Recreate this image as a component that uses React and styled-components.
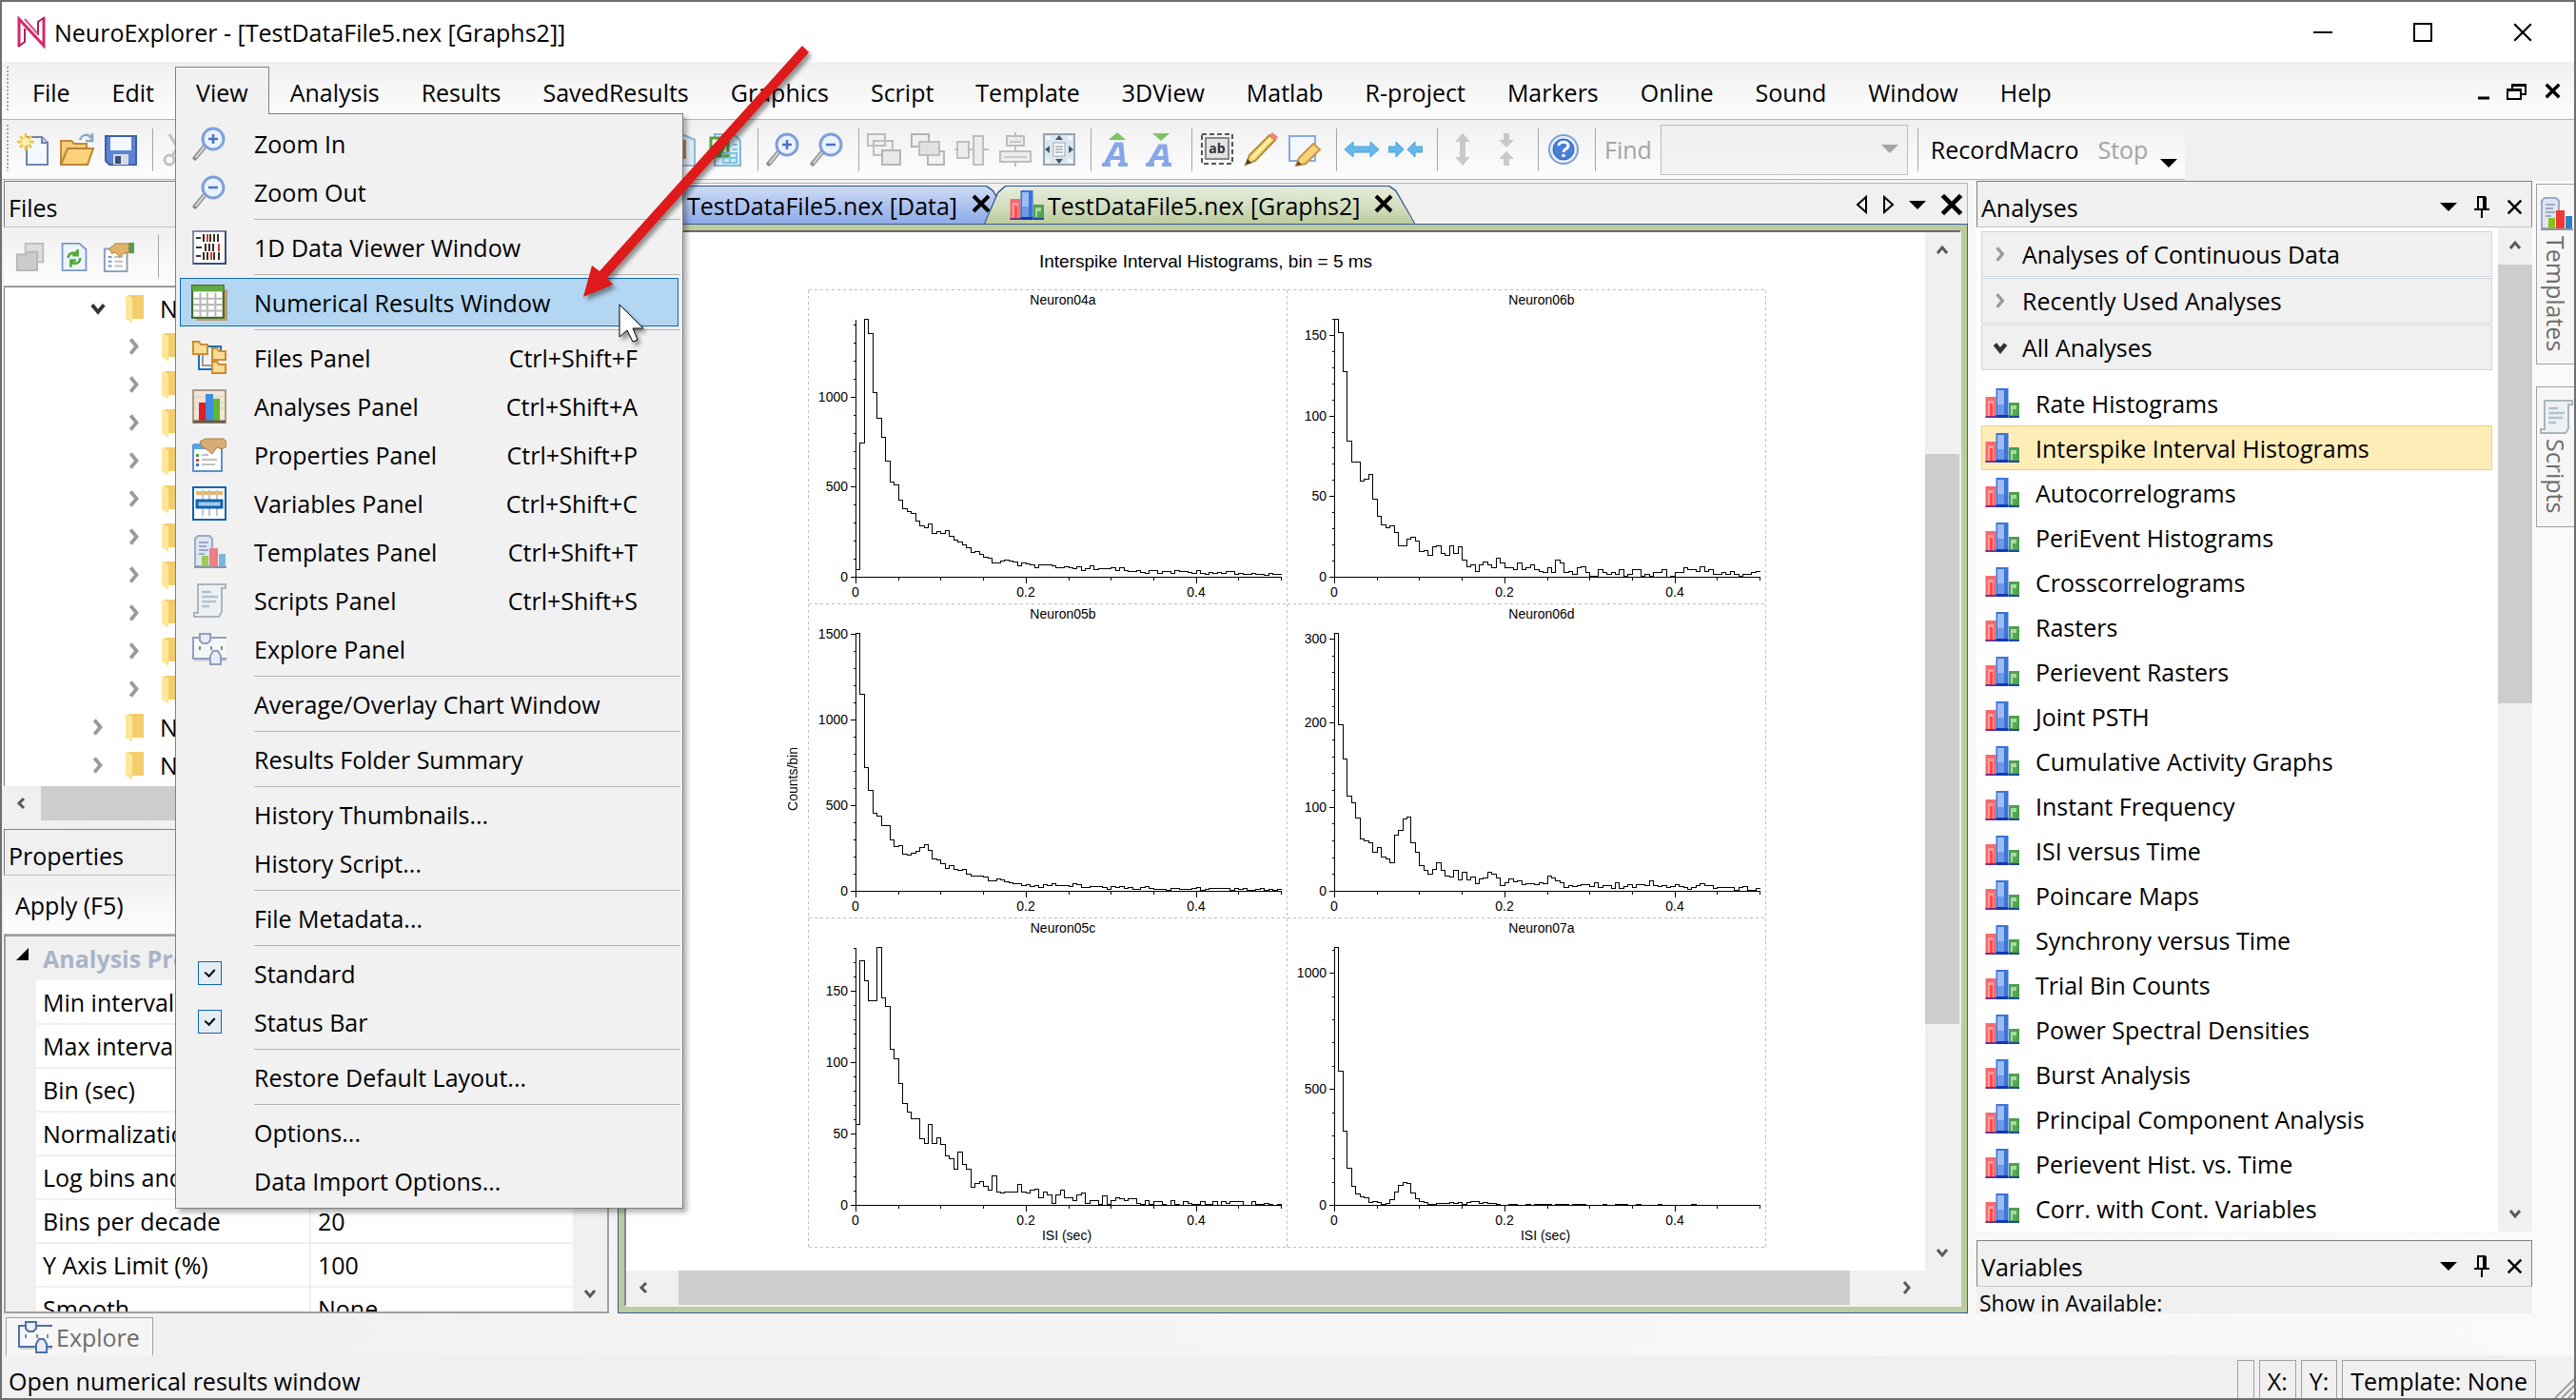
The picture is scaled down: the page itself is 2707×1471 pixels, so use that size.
import { Fragment } from 'react';
import styled, { createGlobalStyle } from 'styled-components';

const GlobalStyle = createGlobalStyle`
  * {
    box-sizing: border-box;
  }
  body {
    margin: 0;
    background: #f0f0f0;
    color: #000;
    font-family: 'Open Sans', 'Noto Sans', sans-serif;
    font-size: 25px;
    line-height: 34px;
  }
  button, input, select {
    font: inherit;
    color: inherit;
  }
  button {
    border: 0;
    padding: 0;
    background: none;
    white-space: nowrap;
  }
  svg {
    display: block;
    flex: none;
  }
`;

/* ---------- window frame ---------- */

const Window = styled.div`
  position: relative;
  display: flex;
  flex-direction: column;
  height: 100vh;
  border: 2px solid #6f6f6f;
  background: linear-gradient(90deg, #f0f0f0, #fafafa);
  overflow: hidden;
`;

const TitleBar = styled.header`
  display: flex;
  align-items: center;
  height: 63px;
  flex: none;
  padding: 0 2px 0 15px;
  background: #fff;
`;

const Title = styled.h1`
  flex: 1;
  margin: 0 0 0 8px;
  font-size: inherit;
  font-weight: 400;
`;

const CaptionButton = styled.button`
  display: flex;
  align-items: center;
  justify-content: center;
  width: 105px;
  height: 63px;
`;

// Dotted handle at the left end of the bars
const Grip = styled.span`
  width: 2px;
  align-self: stretch;
  margin: 5px 3px 8px 5px;
  background: repeating-linear-gradient(#a8a8a8 0 2px, transparent 2px 4px);
`;

/* ---------- menu bar ---------- */

const MenuBar = styled.nav`
  display: flex;
  align-items: flex-start;
  height: 61px;
  flex: none;
  border-bottom: 1px solid #b4b4b4;
  background: linear-gradient(#f0f0f0, #fdfdfd);
`;

const MenuSlot = styled.div`
  position: relative;
  margin-top: 5px;
`;

const MenuButton = styled.button`
  height: 50px;
  padding: 3px 21px 0;
  border: 1px solid transparent;
  border-bottom: 0;
  ${({ $open }) =>
    $open &&
    `
    position: relative;
    z-index: 3;
    border-color: #808080;
    background: #f1f1f1;
  `}
`;

const MdiControls = styled.div`
  display: flex;
  align-items: center;
  gap: 18px;
  height: 61px;
  margin-left: auto;
  padding: 0 14px 0 0;
`;

const Menu = styled.div`
  position: absolute;
  z-index: 2;
  top: 49px;
  left: 0;
  width: 534px;
  padding: 5px 0 3px;
  border: 1px solid #808080;
  background: #f1f1f1;
  box-shadow: 4px 4px 5px rgba(0, 0, 0, 0.3);
`;

const MenuRow = styled.button`
  display: flex;
  align-items: center;
  width: calc(100% - 8px);
  height: 51px;
  margin: 0 4px;
  padding: 2px 42px 2px 11px;
  border: 1px solid ${({ $active }) => ($active ? '#0a68b4' : 'transparent')};
  background: ${({ $active }) => ($active ? '#b3d6f2' : 'none')};
  text-align: left;
`;

const MenuIcon = styled.span`
  display: flex;
  justify-content: center;
  width: 38px;
  margin-right: 28px;
`;

const MenuShortcut = styled.span`
  margin-left: auto;
`;

const MenuDivider = styled.hr`
  height: 1px;
  margin: 3px 2px 3px 82px;
  border: 0;
  background: #b4b4b4;
`;

const MenuCheck = styled.input`
  display: grid;
  place-items: center;
  appearance: none;
  width: 25px;
  height: 25px;
  margin: 0;
  border: 1px solid #0a68b4;
  background: #e5ecf3;
  &::after {
    content: '';
    width: 5px;
    height: 8px;
    margin-top: -4px;
    border: solid #000;
    border-width: 0 2px 2px 0;
    transform: rotate(42deg);
  }
`;

/* ---------- toolbar ---------- */

const ToolbarRow = styled.div`
  display: flex;
  flex: none;
  height: 64px;
  background: #f0f0f0;
`;

const Toolbar = styled.div`
  display: flex;
  align-items: center;
  height: 63px;
  padding-right: 8px;
  border-bottom: 1px solid #b4b4b4;
  background: linear-gradient(#f0f0f0, #fdfdfd);
`;

const ToolButton = styled.button`
  display: flex;
  align-items: center;
  justify-content: center;
  width: 46px;
  height: 46px;
  opacity: ${({ disabled }) => (disabled ? 0.6 : 1)};
`;

const ToolDivider = styled.span`
  width: 1px;
  height: 45px;
  margin: 0 3px 0 10px;
  background: #a5a5a5;
`;

const FindLabel = styled.label`
  display: flex;
  align-items: center;
  gap: 9px;
  margin-left: 6px;
  color: #a3a3a3;
`;

const SelectBox = styled.span`
  position: relative;
  display: block;
  width: 260px;
  svg {
    position: absolute;
    right: 10px;
    top: 21px;
  }
`;

const FindSelect = styled.select`
  display: block;
  appearance: none;
  width: 100%;
  height: 53px;
  border: 1px solid #a3a3a3;
  border-radius: 0;
  background: #f0f0f0;
`;

const TextButton = styled.button`
  padding: 0 10px;
  color: ${({ disabled }) => (disabled ? '#a3a3a3' : '#000')};
`;

const Overflow = styled.span`
  align-self: flex-end;
  padding: 0 0 12px 3px;
`;

/* ---------- docked panels ---------- */

const Workspace = styled.main`
  display: flex;
  flex: 1;
  min-height: 0;
  gap: 9px;
  padding-left: 2px;
`;

const Column = styled.section`
  display: flex;
  flex-direction: column;
  flex: none;
  width: ${({ $width }) => $width}px;
  min-height: 0;
`;

const PanelHeader = styled.div`
  display: flex;
  align-items: center;
  flex: none;
  height: 49px;
  padding: 6px 9px 0 4px;
  border: 1px solid #a0a0a0;
  border-color: #808080 #808080 #c4c4c4;
  background: #f0f0f0;
`;

const PanelTitle = styled.h2`
  flex: 1;
  margin: 0;
  font-size: inherit;
  font-weight: 400;
`;

const PanelButtons = styled.div`
  display: flex;
  align-items: center;
  gap: 18px;
  height: 30px;
`;

const PanelToolbar = styled.div`
  display: flex;
  align-items: center;
  flex: none;
  gap: 14px;
  height: 62px;
  padding: 0 12px;
  border-bottom: 1px solid #b4b4b4;
  background: linear-gradient(#f0f0f0, #fdfdfd);
`;

const Tree = styled.div`
  flex: none;
  height: 525px;
  padding-top: 2px;
  border: 1px solid #828282;
  border-bottom: 0;
  background: #fff;
  overflow: hidden;
`;

const TreeRow = styled.div`
  display: flex;
  align-items: center;
  height: 40px;
  padding-left: ${({ $depth }) => 88 + $depth * 38}px;
`;

const TreeFolder = styled.span`
  margin: 0 16px 0 19px;
`;

// Space between two stacked panels
const PanelGap = styled.div`
  flex: none;
  height: 9px;
`;

const PropertyBox = styled.div`
  display: flex;
  flex: 1;
  min-height: 0;
  border: 2px solid #a0a0a0;
  background: #f0f0f0;
  overflow: hidden;
`;

const PropertyTable = styled.table`
  align-self: flex-start;
  flex: 1;
  border-collapse: collapse;
  table-layout: fixed;
  td, th {
    height: 46px;
    padding: 0;
    text-align: left;
    font-weight: 400;
    white-space: nowrap;
  }
  tbody th, tbody td {
    padding-left: 7px;
    border-bottom: 2px solid #f0f0f0;
    background: #fff;
  }
  tbody td:first-child {
    width: 32px;
    border: 0;
    background: #f0f0f0;
  }
  tbody th {
    width: 288px;
    border-right: 2px solid #f0f0f0;
  }
  thead th {
    padding-left: 7px;
    color: #a9b4c8;
    font-weight: 700;
  }
`;

/* ---------- scroll bars ---------- */

const Scroll = styled.div`
  display: flex;
  flex: none;
  flex-direction: ${({ $horizontal }) => ($horizontal ? 'row' : 'column')};
  ${({ $horizontal }) => ($horizontal ? 'height: 36px;' : 'width: 36px;')}
  ${({ $corner }) => $corner && 'padding-right: 36px;'}
  background: #f0f0f0;
`;

const ScrollArrow = styled.button`
  display: grid;
  place-items: center;
  flex: 0 0 38px;
`;

const ScrollSpan = styled.span`
  flex: ${({ $grow }) => $grow} 1 0;
  background: ${({ $thumb }) => ($thumb ? '#cdcdcd' : 'transparent')};
`;

/* ---------- documents ---------- */

const DocumentArea = styled.section`
  display: flex;
  flex: 1;
  flex-direction: column;
  min-width: 0;
`;

const TabStrip = styled.div`
  display: flex;
  flex: none;
  align-items: flex-end;
  height: 43px;
  margin-top: 2px;
  padding-left: 6px;
  border-top: 1px solid #b4b4b4;
  border-right: 1px solid #b4b4b4;
  background: #f0f0f0;
`;

const DocumentTab = styled.div`
  position: relative;
  display: flex;
  align-items: center;
  height: 40px;
  margin-right: -30px;
  padding: 1px 23px 0 27px;
  z-index: ${({ $active }) => ($active ? 1 : 0)};
  &::before, &::after {
    content: '';
    position: absolute;
    z-index: -1;
    inset: 0;
    clip-path: polygon(0 100%, 14px 7px, 22px 0, calc(100% - 27px) 0, calc(100% - 20px) 5px, 100% 100%);
    background: #2d4f91;
  }
  &::after {
    inset: 1px 1px 0;
    background: ${({ $active }) =>
      $active
        ? 'linear-gradient(#e6eddb, #d5dfc2 50%, #bccc9e)'
        : 'linear-gradient(#cfdcf5, #a9c0ee 55%, #8eabe8)'};
  }
`;

const TabLabel = styled.button`
  display: flex;
  align-items: center;
  gap: 4px;
`;

const TabClose = styled.button`
  margin: -4px 0 0 15px;
`;

const TabControls = styled.div`
  display: flex;
  align-items: center;
  gap: 15px;
  height: 40px;
  margin-left: auto;
  padding-right: 4px;
`;

const DocumentFrame = styled.div`
  display: flex;
  flex: 1;
  min-height: 0;
  flex-direction: column;
  border: 1px solid #3c5c96;
  padding: 6px;
  background: #bccc9e;
`;

const DocumentView = styled.div`
  display: flex;
  flex-direction: column;
  flex: 1;
  min-height: 0;
  border: 2px solid #f0f0f0;
  border-top-color: #696969;
  border-left-color: #888;
`;

const DocumentBody = styled.div`
  display: flex;
  flex: 1;
  min-height: 0;
`;

const Page = styled.div`
  flex: 1;
  min-width: 0;
  padding-top: 16px;
  background: #fff;
  font-family: 'Liberation Sans', Arial, sans-serif;
  font-size: 14px;
  overflow: hidden;
`;

const PageTitle = styled.h3`
  margin: 0 0 14px 434px;
  font-size: 19px;
  font-weight: 400;
  line-height: 30px;
`;

const Figure = styled.div`
  display: flex;
  align-items: center;
  padding-left: 165px;
`;

const AxisTitle = styled.span`
  width: 26px;
  margin-top: 22px;
  line-height: 20px;
  writing-mode: vertical-rl;
  transform: rotate(180deg);
`;

const ChartGrid = styled.div`
  display: grid;
  grid-template-columns: 503px 503px;
  svg {
    overflow: visible;
    font-size: 14px;
  }
`;

/* ---------- analyses list ---------- */

const ListBox = styled.div`
  display: flex;
  flex: 1;
  min-height: 0;
  background: #fff;
`;

const List = styled.div`
  flex: 1;
  padding: 4px 6px 0 5px;
  overflow: hidden;
`;

const GroupButton = styled.button`
  display: flex;
  align-items: center;
  gap: 14px;
  width: 100%;
  height: 48px;
  margin-bottom: 1px;
  padding-left: 10px;
  border: 1px solid #ccd3df;
  background: #f0f0f0;
`;

const Items = styled.ul`
  margin: 11px 0 0;
  padding: 0;
  list-style: none;
`;

const ItemButton = styled.button`
  display: flex;
  align-items: center;
  gap: 17px;
  width: 100%;
  height: 47px;
  padding-left: 3px;
  border: 1px solid ${({ $active }) => ($active ? '#f0d078' : 'transparent')};
  background: ${({ $active }) => ($active ? '#ffedb8' : 'none')};
`;

const VariablesPanel = styled.div`
  flex: none;
  height: 77px;
  margin-top: 9px;
  background: #f0f0f0;
  overflow: hidden;
`;

const VariablesText = styled.div`
  padding-left: 3px;
  font-size: 23px;
`;

const SideBar = styled.aside`
  display: flex;
  flex-direction: column;
  gap: 23px;
  width: 40px;
  margin-left: -5px;
  padding-top: 3px;
`;

const SideTab = styled.button`
  display: flex;
  flex-direction: column;
  align-items: center;
  gap: 5px;
  padding: 13px 0;
  border: 1px solid #a0a0a0;
  border-right: 0;
  background: #f6f6f6;
  color: #6d6d6d;
`;

const SideTabText = styled.span`
  writing-mode: vertical-rl;
`;

/* ---------- bottom bars ---------- */

const DockBar = styled.div`
  flex: none;
  height: 44px;
  padding: 4px 0 0 4px;
`;

const DockTab = styled.button`
  display: flex;
  align-items: center;
  gap: 4px;
  height: 40px;
  padding: 0 13px 0 12px;
  border: 1px solid #a0a0a0;
  border-bottom: 0;
  background: #f6f6f6;
  color: #6d6d6d;
`;

const StatusBar = styled.footer`
  display: flex;
  flex: none;
  align-items: flex-end;
  gap: 5px;
  height: 45px;
  background: #f0f0f0;
`;

const StatusText = styled.span`
  flex: 1;
  padding: 0 0 1px 7px;
`;

const StatusCell = styled.span`
  height: 40px;
  padding: 4px 8px 0;
  border: 1px solid #a0a0a0;
  border-bottom: 0;
`;

/* ---------- icons ---------- */

function Icon({ children, size = 36 }) {
  return (
    <svg width={size} height={size} viewBox="0 0 36 36" fill="none" aria-hidden="true">
      {children}
    </svg>
  );
}

function Magnifier({ minus }) {
  return (
    <Icon>
      <path d="M3 33 L13 21" stroke="#8c8c8c" strokeWidth="5" strokeLinecap="round" />
      <path d="M4 32 L13 21" stroke="#d5d5d5" strokeWidth="2" strokeLinecap="round" />
      <circle cx="22" cy="13" r="11" fill="#eaf2ff" stroke="#7d9fdc" strokeWidth="3" />
      <path d={minus ? 'M17 13H27' : 'M17 13H27M22 8V18'} stroke="#4b74c4" strokeWidth="2.5" />
    </Icon>
  );
}

function Bars() {
  return (
    <Icon>
      <rect x="0.5" y="11" width="11" height="22" fill="#f56a6e" />
      <rect x="3" y="15" width="6" height="16" fill="#fb9c9c" />
      <rect x="5" y="18" width="3" height="13" fill="#ff4a4a" />
      <rect x="0.5" y="31" width="11" height="2" fill="#7a2f86" />
      <rect x="11.5" y="2" width="13" height="31" fill="#3a74d8" />
      <rect x="13" y="4" width="7" height="15" fill="#9dbcf1" />
      <rect x="13" y="19" width="7" height="11" fill="#6f98e6" />
      <rect x="11.5" y="30" width="13" height="3" fill="#1438b8" />
      <rect x="25" y="17" width="11" height="16" fill="#4ea04e" />
      <rect x="27" y="20" width="6" height="10" fill="#a9d9a4" />
      <rect x="29" y="24" width="4" height="6" fill="#4fae55" />
      <rect x="25" y="31" width="11" height="2" fill="#1f4a9a" />
    </Icon>
  );
}

function ExploreIcon({ color = '#8f9fc0' }) {
  return (
    <Icon>
      <path d="M36 6H1V28H36" fill="#f6f7f9" stroke={color} strokeWidth="2" />
      <path d="M2 30H36" stroke="#cfd3da" strokeWidth="2" />
      <path d="M8 15V19M20 15V19M31 15V19" stroke="#888" strokeWidth="2" />
      <path d="M8 2H19V9L16 12H11L8 9Z" fill="#e8edf8" stroke={color} strokeWidth="2" />
      <path d="M19 34V25L22 20H27L30 25V34Z" fill="#e8edf8" stroke={color} strokeWidth="2" />
    </Icon>
  );
}

function TemplateIcon({ bright }) {
  return (
    <Icon>
      <path d="M3 33V4L6 1H18L21 4V33Z" fill="#dfe6f1" stroke="#9aabc6" strokeWidth="2" />
      <path d="M7 8H17M7 12H15M7 16H17M7 20H13" stroke="#9aabc6" strokeWidth="2" />
      <rect x="10" y="22" width="7" height="11" fill={bright ? '#86c21c' : '#9ccb58'} />
      <rect x="18" y="14" width="9" height="19" fill={bright ? '#ee3a35' : '#ee7f85'} />
      <rect x="28" y="20" width="7" height="13" fill={bright ? '#2b82cc' : '#79b7e4'} />
      <path d="M2 34H36" stroke="#8c95a8" strokeWidth="2" />
    </Icon>
  );
}

function ScriptIcon() {
  return (
    <Icon>
      <path d="M6 1H35V5H31V30L28 35H2V31H6Z" fill="#eef1f3" stroke="#a9b5bd" strokeWidth="2" />
      <path d="M10 9H20M10 14H27M10 19H25M10 24H18" stroke="#b2c2cf" strokeWidth="2.5" />
    </Icon>
  );
}

function PropertiesIcon() {
  return (
    <Icon>
      <rect x="1" y="8" width="30" height="27" fill="#fff" stroke="#5f8fd0" strokeWidth="2" />
      <rect x="1" y="6" width="22" height="6" fill="#5aa2e6" />
      <rect x="4" y="17" width="3" height="3" fill="#4c9f45" />
      <rect x="4" y="22" width="3" height="3" fill="#d2434a" />
      <rect x="4" y="27" width="3" height="3" fill="#3f73c9" />
      <path d="M10 18H17M10 23H26M10 28H24" stroke="#bfbfbf" strokeWidth="2" />
      <path d="M8 4L14 1H33L36 4V9L31 12L26 10L21 17L15 12L10 9Z" fill="#d9ab74" stroke="#b07f45" />
    </Icon>
  );
}

function FolderStrip() {
  return (
    <svg width="20" height="31" viewBox="0 0 20 31" aria-hidden="true">
      <path d="M3 1H19V26H3Z" fill="#f3cd6d" />
      <path d="M0 1L7 4V31L0 26Z" fill="#ffe69a" />
    </svg>
  );
}

function Chevron({ dir, color = '#5a5a55', size = 16, width = 3 }) {
  const paths = {
    up: 'M3 11L8 5L13 11',
    down: 'M3 5L8 11L13 5',
    left: 'M10 3L5 8L10 13',
    right: 'M5 2L10 8L5 14',
  };
  return (
    <svg width={size} height={size} viewBox="0 0 16 16" fill="none" aria-hidden="true">
      <path d={paths[dir]} stroke={color} strokeWidth={width} />
    </svg>
  );
}

function Cross({ size = 17, width = 3 }) {
  return (
    <svg width={size} height={size} viewBox="0 0 20 20" aria-hidden="true">
      <path d="M2 2L18 18M18 2L2 18" stroke="#000" strokeWidth={width} />
    </svg>
  );
}

function Caret({ color = '#000' }) {
  return (
    <svg width="18" height="9" viewBox="0 0 18 9" aria-hidden="true">
      <path d="M0 0H18L9 9Z" fill={color} />
    </svg>
  );
}

function Pin() {
  return (
    <svg width="16" height="23" viewBox="0 0 16 23" fill="none" aria-hidden="true">
      <path d="M4 14V1H11V14M0 14H16M8 14V23" stroke="#000" strokeWidth="2" />
      <path d="M11 1V14" stroke="#000" strokeWidth="4" />
    </svg>
  );
}

function Logo() {
  return (
    <svg width="32" height="34" viewBox="0 0 32 34" fill="none" aria-hidden="true">
      <path d="M3 32V3L29 31V2" stroke="#d22a68" strokeWidth="3" />
      <path d="M2 32L9 27V13M23 20V6L30 1" stroke="#a8245c" strokeWidth="2" />
      <path d="M9 3L23 19" stroke="#e2558a" strokeWidth="2" />
    </svg>
  );
}

const icons = {
  newFile: (
    <Icon>
      <path d="M11 5H27L33 11V34H11Z" fill="#f4f8ff" stroke="#6c83ad" strokeWidth="2" />
      <path d="M27 5V11H33" fill="#cbd9f2" stroke="#6c83ad" strokeWidth="2" />
      <path d="M10 1V19M1 10H19M4 4L16 16M16 4L4 16" stroke="#f3c64b" strokeWidth="3" />
      <circle cx="10" cy="10" r="4" fill="#fff2b0" />
    </Icon>
  ),
  open: (
    <Icon>
      <path d="M1 34V9H12L15 12H28V18" fill="#f3cd7b" stroke="#c08a35" strokeWidth="2" />
      <path d="M1 34L8 17H35L29 34Z" fill="#fbd27a" stroke="#b98436" strokeWidth="2" />
      <path d="M21 8C23 2 30 1 33 6M34 1V9H27" stroke="#8fa7bd" strokeWidth="2.5" />
    </Icon>
  ),
  save: (
    <Icon>
      <path d="M2 4H34V34H6L2 30Z" fill="#5c84d6" stroke="#3f60a8" strokeWidth="2" />
      <rect x="7" y="5" width="22" height="14" fill="#f4f8ff" />
      <rect x="10" y="23" width="16" height="11" fill="#d7dde8" />
      <rect x="12" y="25" width="6" height="8" fill="#3b4f79" />
    </Icon>
  ),
  cut: (
    <Icon>
      <path d="M9 2L23 25M25 2L12 25" stroke="#a0a0a0" strokeWidth="3" />
      <circle cx="9" cy="29" r="5" stroke="#a0a0a0" strokeWidth="3" />
      <circle cx="26" cy="29" r="5" stroke="#a0a0a0" strokeWidth="3" />
    </Icon>
  ),
  copy: (
    <Icon>
      <path d="M2 3H20L31 8V35H2Z" fill="#dcebf8" stroke="#8fb6d8" strokeWidth="2" />
      <rect x="5" y="8" width="17" height="20" fill="#c9803c" />
    </Icon>
  ),
  table: (
    <Icon>
      <path d="M6 2H26L33 9V35H6Z" fill="#d8ecf8" stroke="#86b5d4" strokeWidth="2" />
      <rect x="2" y="6" width="18" height="19" fill="#fff" stroke="#4fa33b" strokeWidth="3" />
      <path d="M10 24L17 12" stroke="#4fa33b" strokeWidth="4" />
      <path d="M15 22H29V32H15ZM15 27H29M22 22V32M25 13H30M25 18H30" stroke="#7dc3e3" strokeWidth="2" />
    </Icon>
  ),
  front: (
    <Icon>
      <path d="M1 2H19V14H1ZM7 9H27V24H7Z" fill="#eee" stroke="#999" strokeWidth="2" />
      <path d="M16 19H35V34H16Z" fill="#ddd" stroke="#888" strokeWidth="2" />
    </Icon>
  ),
  back: (
    <Icon>
      <path d="M18 20H35V34H18ZM1 2H19V15H1Z" fill="#eee" stroke="#888" strokeWidth="2" />
      <path d="M9 10H30V24H9Z" fill="#d4d4d4" stroke="#999" strokeWidth="2" />
    </Icon>
  ),
  alignV: (
    <Icon>
      <path d="M0 18H36" stroke="#999" strokeWidth="2" />
      <path d="M3 10H15V27H3ZM20 4H30V34H20Z" fill="#e6e6e6" stroke="#999" strokeWidth="2" />
    </Icon>
  ),
  alignH: (
    <Icon>
      <path d="M18 0V36" stroke="#999" strokeWidth="2" />
      <path d="M9 4H27V14H9ZM2 20H34V31H2Z" fill="#e6e6e6" stroke="#999" strokeWidth="2" />
      <path d="M12 10H24M6 26H30" stroke="#aaa" strokeWidth="2" />
    </Icon>
  ),
  fit: (
    <Icon>
      <rect x="2" y="2" width="32" height="32" fill="#dce6ef" stroke="#9aa5b0" strokeWidth="2" />
      <rect x="12" y="11" width="12" height="14" fill="#fff" stroke="#9aa5b0" />
      <path d="M14 15H22M14 18H22M14 21H22" stroke="#667d99" />
      <path d="M18 3L22 8H14ZM18 33L22 28H14ZM3 18L8 14V22ZM33 18L28 14V22Z" fill="#44566c" />
      <path d="M4 4H9V8H4ZM27 4H32V8H27ZM4 28H9V32H4ZM27 28H32V32H27Z" fill="#f4f6f8" />
    </Icon>
  ),
  fontUp: (
    <Icon>
      <path d="M19 0L28 8H10Z" fill="#7cc266" />
      <path d="M7 34L18 13H23L25 34" stroke="#86a7e8" strokeWidth="5" />
      <path d="M3 34H12M20 34H30M11 27H24" stroke="#86a7e8" strokeWidth="4" />
    </Icon>
  ),
  fontDown: (
    <Icon>
      <path d="M19 9L28 1H10Z" fill="#7cc266" />
      <path d="M7 34L18 15H23L25 34" stroke="#86a7e8" strokeWidth="5" />
      <path d="M3 34H12M20 34H30M11 27H24" stroke="#86a7e8" strokeWidth="4" />
    </Icon>
  ),
  textBox: (
    <Icon>
      <rect x="2" y="2" width="32" height="31" stroke="#555" strokeWidth="2" strokeDasharray="5 3" />
      <rect x="6" y="6" width="24" height="22" fill="#e4e4e4" stroke="#888" strokeWidth="2" />
      <text x="18" y="22" fill="#333" fontSize="14" fontWeight="700" textAnchor="middle">ab</text>
    </Icon>
  ),
  pencil: (
    <Icon>
      <path d="M2 34L6 24L27 3L33 8L12 30Z" fill="#f6dd78" stroke="#b08c34" strokeWidth="2" />
      <path d="M27 3L30 0L36 5L33 9Z" fill="#ee7f86" />
      <path d="M2 34L4 28L8 32Z" fill="#4c4030" />
      <path d="M9 27L28 7" stroke="#fff2b8" strokeWidth="2" />
    </Icon>
  ),
  notePencil: (
    <Icon>
      <rect x="2" y="4" width="27" height="26" fill="#f3f8ff" stroke="#85a9e0" strokeWidth="2" />
      <path d="M9 35L12 27L27 12L34 18L19 33Z" fill="#f6d377" stroke="#c79445" strokeWidth="2" />
      <path d="M9 35L11 30L15 34Z" fill="#6b4c2a" />
    </Icon>
  ),
  widen: (
    <Icon>
      <path d="M0 18L9 10V15H27V10L36 18L27 26V21H9V26Z" fill="#65b8ec" stroke="#4a9fd8" />
    </Icon>
  ),
  narrow: (
    <Icon>
      <path d="M16 18L8 10V15H0V21H8V26ZM20 18L28 10V15H36V21H28V26Z" fill="#65b8ec" stroke="#4a9fd8" />
    </Icon>
  ),
  taller: (
    <Icon>
      <path d="M18 1L26 10H21V26H26L18 35L10 26H15V10H10Z" fill="#ababab" />
    </Icon>
  ),
  shorter: (
    <Icon>
      <path d="M18 16L26 8H21V1H15V8H10ZM18 20L26 28H21V35H15V28H10Z" fill="#ababab" />
    </Icon>
  ),
  help: (
    <Icon>
      <circle cx="18" cy="18" r="15" fill="#e9effa" stroke="#7a9edb" strokeWidth="2" />
      <circle cx="18" cy="18" r="11" fill="#4a7fd8" stroke="#2f5fb8" />
      <path d="M13 14C13 9 23 9 23 14C23 18 18 17 18 21M18 23V26" stroke="#fff" strokeWidth="3" />
    </Icon>
  ),
  filesGray: (
    <Icon size={32}>
      <path d="M12 2H33V24H12Z" fill="#ddd" stroke="#bbb" strokeWidth="2" />
      <path d="M2 34V15H12L15 12H26V34Z" fill="#ccc" stroke="#b5b5b5" strokeWidth="2" />
    </Icon>
  ),
  refresh: (
    <Icon size={32}>
      <path d="M4 2H24L32 9V34H4Z" fill="#eef4fd" stroke="#7b97c4" strokeWidth="2" />
      <path d="M11 19C11 13 18 12 22 14M22 9V16H16M25 19C25 26 18 27 14 24M14 30V22H20" stroke="#54a83a" strokeWidth="3" />
    </Icon>
  ),
  fileProps: (
    <Icon size={34}>
      <rect x="2" y="9" width="25" height="25" fill="#fff" stroke="#8a9bb5" strokeWidth="2" />
      <path d="M6 18H10M6 23H10M6 28H10" stroke="#6f97d6" strokeWidth="2" />
      <path d="M13 18H22M13 23H22M13 28H22" stroke="#bfbfbf" strokeWidth="2" />
      <path d="M7 9L14 3H29V13L24 14L19 18L14 13L10 14Z" fill="#e0b36a" stroke="#a9803c" />
      <rect x="29" y="2" width="6" height="12" fill="#5f9a52" />
    </Icon>
  ),
  viewer: (
    <Icon>
      <rect x="1" y="1" width="34" height="34" fill="#fdfdfd" stroke="#7d8aa0" strokeWidth="2" />
      <path d="M35 1V35H1" stroke="#3d4f70" strokeWidth="2" />
      <path d="M4 8H9M4 18H10M4 27H9" stroke="#333" strokeWidth="2" />
      <path d="M12 4V12M19 4V12M23 4V12M27 4V12M14 14V22M18 14V22M22 14V22M12 23V31M16 23V31M23 23V31M28 23V31" stroke="#3a2d28" strokeWidth="2" />
      <path d="M16 4V12M28 14V22M20 23V31" stroke="#d63b2f" strokeWidth="2" />
    </Icon>
  ),
  numbers: (
    <Icon size={38}>
      <rect x="5" y="5" width="31" height="31" fill="#bd9b6a" />
      <rect x="1" y="1" width="31" height="32" fill="#fff" stroke="#3c6a2b" strokeWidth="2" />
      <rect x="1" y="1" width="31" height="6" fill="#63a844" />
      <path d="M2 14H31M2 20H31M2 26H31M9 8V32M16 8V32M24 8V32" stroke="#b9b9b9" strokeWidth="2" />
    </Icon>
  ),
  files: (
    <Icon>
      <path d="M7 13V30H22M16 6H30V12" stroke="#1f6fb8" strokeWidth="2" />
      <path d="M11 14V26H20" stroke="#999" strokeWidth="2" />
      <path d="M1 1H7L9 4H16V14H1ZM21 8H26L28 11H35V20H21ZM21 22H26L28 25H35V34H21Z" fill="#fbdc97" stroke="#d08a32" strokeWidth="2" />
    </Icon>
  ),
  analyses: (
    <Icon>
      <rect x="1" y="1" width="34" height="34" fill="#efe5d8" stroke="#ab9c86" strokeWidth="2" />
      <path d="M2 8H34M2 14H34M2 20H34" stroke="#dacdb9" />
      <rect x="7" y="14" width="7" height="19" fill="#de1f26" />
      <rect x="14" y="5" width="8" height="28" fill="#3d8ede" />
      <rect x="22" y="10" width="7" height="23" fill="#62b62c" />
      <path d="M1 34H35" stroke="#6b5a48" strokeWidth="3" />
    </Icon>
  ),
  variables: (
    <Icon>
      <rect x="1" y="1" width="34" height="34" fill="#fff" stroke="#0d62b0" strokeWidth="2" />
      <path d="M4 7H32" stroke="#f2b35a" strokeWidth="4" />
      <path d="M11 4V31M18 4V31M26 4V31" stroke="#b8c6d6" strokeWidth="2" />
      <rect x="5" y="15" width="26" height="7" fill="#a9c8ea" stroke="#0d62b0" strokeWidth="3" />
    </Icon>
  ),
};

/* ---------- data ---------- */

const menusBefore = ['File', 'Edit'];
const menusAfter = [
  'Analysis', 'Results', 'SavedResults', 'Graphics', 'Script', 'Template', '3DView', 'Matlab',
  'R-project', 'Markers', 'Online', 'Sound', 'Window', 'Help',
];

const viewMenu = [
  [
    { label: 'Zoom In', icon: <Magnifier /> },
    { label: 'Zoom Out', icon: <Magnifier minus /> },
  ],
  [{ label: '1D Data Viewer Window', icon: icons.viewer }],
  [{ label: 'Numerical Results Window', icon: icons.numbers, active: true }],
  [
    { label: 'Files Panel', icon: icons.files, keys: 'Ctrl+Shift+F' },
    { label: 'Analyses Panel', icon: icons.analyses, keys: 'Ctrl+Shift+A' },
    { label: 'Properties Panel', icon: <PropertiesIcon />, keys: 'Ctrl+Shift+P' },
    { label: 'Variables Panel', icon: icons.variables, keys: 'Ctrl+Shift+C' },
    { label: 'Templates Panel', icon: <TemplateIcon />, keys: 'Ctrl+Shift+T' },
    { label: 'Scripts Panel', icon: <ScriptIcon />, keys: 'Ctrl+Shift+S' },
    { label: 'Explore Panel', icon: <ExploreIcon /> },
  ],
  [{ label: 'Average/Overlay Chart Window' }],
  [{ label: 'Results Folder Summary' }],
  [{ label: 'History Thumbnails...' }, { label: 'History Script...' }],
  [{ label: 'File Metadata...' }],
  [
    { label: 'Standard', checked: true },
    { label: 'Status Bar', checked: true },
  ],
  [{ label: 'Restore Default Layout...' }],
  [{ label: 'Options...' }, { label: 'Data Import Options...' }],
];

const toolGroups = [
  [['New', 'newFile'], ['Open', 'open'], ['Save', 'save']],
  [['Cut', 'cut', true], ['Copy', 'copy'], ['Paste', 'copy']],
  [['Bring forward', 'front', true], ['Send backward', 'back', true]],
  [['Edit', 'pencil']],
  [['Notes', 'notePencil'], ['Fit', 'fit']],
  [['Data', 'table'], ['Table', 'table']],
  [['Copy graphics', 'copy'], ['Copy results', 'table']],
  [['Zoom in', 'zoomIn'], ['Zoom out', 'zoomOut']],
  [
    ['To front', 'front', true],
    ['To back', 'back', true],
    ['Align middle', 'alignV', true],
    ['Align center', 'alignH', true],
    ['Fit to page', 'fit'],
  ],
  [['Larger font', 'fontUp'], ['Smaller font', 'fontDown']],
  [['Text box', 'textBox'], ['Draw', 'pencil'], ['Edit note', 'notePencil']],
  [['Widen', 'widen'], ['Narrow', 'narrow']],
  [['Taller', 'taller', true], ['Shorter', 'shorter', true]],
  [['Help', 'help']],
];

const toolIcons = { ...icons, zoomIn: <Magnifier />, zoomOut: <Magnifier minus /> };

const properties = [
  ['Min interval', ''],
  ['Max interval', ''],
  ['Bin (sec)', ''],
  ['Normalization', ''],
  ['Log bins and', ''],
  ['Bins per decade', '20'],
  ['Y Axis Limit (%)', '100'],
  ['Smooth', 'None'],
];

const analyses = [
  'Rate Histograms', 'Interspike Interval Histograms', 'Autocorrelograms', 'PeriEvent Histograms',
  'Crosscorrelograms', 'Rasters', 'Perievent Rasters', 'Joint PSTH', 'Cumulative Activity Graphs',
  'Instant Frequency', 'ISI versus Time', 'Poincare Maps', 'Synchrony versus Time',
  'Trial Bin Counts', 'Power Spectral Densities', 'Burst Analysis', 'Principal Component Analysis',
  'Perievent Hist. vs. Time', 'Corr. with Cont. Variables',
];

// bins: bar heights out of 271, max: value at the top of the axis
const charts = [
  {
    name: 'Neuron04a', max: 1432, major: 500, minor: 100,
    bins: [8,141,271,256,194,167,147,122,100,97,81,72,69,67,59,54,52,56,46,48,46,49,43,39,37,34,31,26,27,24,21,20,15,15,17,18,17,16,12,15,14,13,10,13,13,13,12,10,10,11,10,9,11,7,9,12,8,9,9,9,10,7,10,7,6,6,7,5,4,7,7,4,6,6,4,7,6,6,5,4,7,4,3,5,4,5,4,6,6,3,4,3,3,4,3,3,2,4,3,3],
  },
  {
    name: 'Neuron06b', max: 160, major: 50, minor: 10,
    bins: [271,257,216,143,121,121,101,103,108,82,64,55,52,54,47,33,33,40,42,38,27,28,23,32,33,25,23,33,25,32,18,11,13,6,13,16,13,10,20,15,10,10,8,15,8,10,13,8,6,5,10,5,18,15,5,6,3,10,11,5,1,1,8,5,3,5,3,8,1,3,8,8,1,3,1,5,5,8,0,1,5,5,10,8,8,6,11,6,8,3,3,5,3,6,3,1,3,3,5,6],
  },
  {
    name: 'Neuron05b', max: 1505, major: 500, minor: 100,
    bins: [271,207,130,106,82,79,69,69,54,47,48,39,38,40,42,46,49,43,34,33,29,24,27,23,22,23,18,16,16,16,15,11,11,13,12,10,9,8,8,6,7,5,6,4,7,6,8,6,6,6,5,8,7,4,4,5,5,5,4,2,5,4,5,3,4,2,2,4,5,3,2,2,2,1,3,3,2,2,2,3,4,1,2,3,3,3,3,3,1,3,2,3,1,1,2,3,1,2,1,2],
  },
  {
    name: 'Neuron06d', max: 307, major: 100, minor: 20,
    bins: [271,175,139,100,93,77,55,53,51,41,46,36,34,30,59,64,76,78,51,41,27,22,18,23,30,22,16,15,22,12,20,12,15,8,13,14,20,18,14,6,9,13,10,11,7,8,8,7,9,8,16,14,11,9,4,6,5,6,7,7,5,9,4,6,6,3,9,3,5,7,4,7,7,6,11,6,5,6,4,5,7,5,4,2,4,6,8,6,6,3,4,4,4,4,1,4,5,1,1,3],
  },
  {
    name: 'Neuron05c', max: 181, major: 50, minor: 10, last: true,
    bins: [85,257,236,215,215,271,218,209,164,154,128,107,98,91,91,70,65,85,65,71,64,52,49,38,56,43,38,19,23,25,20,16,31,14,13,14,14,14,22,14,13,16,17,8,14,11,2,11,16,8,8,5,11,13,2,5,5,1,10,1,5,8,7,5,7,7,2,1,5,1,4,4,1,0,5,1,0,4,2,1,1,4,1,1,4,0,4,2,4,4,4,0,0,4,1,1,2,1,0,1],
  },
  {
    name: 'Neuron07a', max: 1112, major: 500, minor: 100, last: true,
    bins: [271,141,78,39,20,12,9,8,3,4,3,1,2,6,14,21,24,23,13,7,4,3,1,1,2,2,2,3,2,3,1,3,4,4,2,3,2,2,1,0,0,1,1,0,0,1,0,1,1,1,1,0,1,1,1,0,1,1,1,0,0,0,0,1,0,0,1,1,1,0,0,1,0,0,0,0,1,0,0,0,0,0,0,0,1,0,0,0,0,0,0,0,0,0,0,0,0,0,0,0],
  },
];

/* ---------- parts ---------- */

function Scrollbar({ horizontal, corner, before, thumb, after }) {
  return (
    <Scroll $horizontal={horizontal} $corner={corner}>
      <ScrollArrow aria-label={horizontal ? 'Scroll left' : 'Scroll up'}>
        <Chevron dir={horizontal ? 'left' : 'up'} />
      </ScrollArrow>
      <ScrollSpan $grow={before} />
      <ScrollSpan $grow={thumb} $thumb />
      <ScrollSpan $grow={after} />
      <ScrollArrow aria-label={horizontal ? 'Scroll right' : 'Scroll down'}>
        <Chevron dir={horizontal ? 'right' : 'down'} />
      </ScrollArrow>
    </Scroll>
  );
}

function Histogram({ name, bins, max, major, minor, last }) {
  const left = 50;
  const width = 447;
  const base = 302;
  const height = last ? 346 : 330;
  const xAt = (i) => left + Math.round((i * width) / 100);
  const yAt = (value) => base - Math.round((value * 271) / max);

  const outline = bins.map((h, i) => `V${base - h}H${xAt(i + 1)}`).join('');
  const yTicks = [];
  for (let v = 0; v <= max; v += minor) yTicks.push(v);
  const xTicks = Array.from({ length: 11 }, (_, i) => i);

  return (
    <svg width="503" height={height} shapeRendering="crispEdges" role="img" aria-label={name}>
      <g fill="none" stroke="#bdbdbd" strokeDasharray="3 3" transform="translate(.5 .5)">
        <path d={`M0 0H503M0 0V${height}M503 0V${height}`} />
        {last && <path d={`M0 ${height}H503`} />}
      </g>
      <g fill="none" stroke="#000" transform="translate(.5 .5)">
        <path d={`M${left} ${base}${outline}`} />
        <path d={`M${left} 31V${base}H${left + width}`} />
        {yTicks.map((v) => (
          <path key={v} d={`M${left} ${yAt(v)}h${v % major ? -3 : -6}`} />
        ))}
        {xTicks.map((i) => (
          <path key={i} d={`M${xAt(i * 10)} ${base}v${i % 4 ? 3 : 6}`} />
        ))}
      </g>
      <text x="268" y="16" textAnchor="middle">{name}</text>
      {yTicks.filter((v) => v % major === 0).map((v) => (
        <text key={v} x="42" y={yAt(v) + 5} textAnchor="end">{v}</text>
      ))}
      <text x={xAt(0)} y="323" textAnchor="middle">0</text>
      <text x={xAt(40)} y="323" textAnchor="middle">0.2</text>
      <text x={xAt(80)} y="323" textAnchor="middle">0.4</text>
      {last && <text x="272" y="339" textAnchor="middle">ISI (sec)</text>}
    </svg>
  );
}

function ViewMenu() {
  return (
    <Menu role="menu">
      {viewMenu.map((group, g) => (
        <Fragment key={g}>
          {g > 0 && <MenuDivider />}
          {group.map(({ label, icon, keys, active, checked }) => (
            <MenuRow
              key={label}
              as={checked ? 'label' : 'button'}
              role={checked ? undefined : 'menuitem'}
              $active={active}
            >
              <MenuIcon>{checked ? <MenuCheck type="checkbox" defaultChecked /> : icon}</MenuIcon>
              {label}
              {keys && <MenuShortcut>{keys}</MenuShortcut>}
            </MenuRow>
          ))}
        </Fragment>
      ))}
    </Menu>
  );
}

function MainToolbar() {
  return (
    <ToolbarRow>
      <Toolbar>
        <Grip />
        {toolGroups.map((group, g) => (
          <Fragment key={g}>
            {group.map(([label, icon, disabled]) => (
              <ToolButton key={label} aria-label={label} disabled={disabled}>
                {toolIcons[icon]}
              </ToolButton>
            ))}
            <ToolDivider />
          </Fragment>
        ))}
        <FindLabel>
          Find
          <SelectBox>
            <FindSelect disabled />
            <Caret color="#a3a3a3" />
          </SelectBox>
        </FindLabel>
        <ToolDivider />
        <TextButton>RecordMacro</TextButton>
        <TextButton disabled>Stop</TextButton>
        <Overflow>
          <Caret />
        </Overflow>
      </Toolbar>
    </ToolbarRow>
  );
}

function HeaderButtons() {
  return (
    <PanelButtons>
      <button aria-label="Panel menu"><Caret /></button>
      <button aria-label="Auto hide"><Pin /></button>
      <button aria-label="Close panel"><Cross /></button>
    </PanelButtons>
  );
}

function FilesPanel() {
  const folders = [
    { open: true, name: 'Neurons' },
    ...Array(10).fill({ depth: 1 }),
    { name: 'Neurons' },
    { name: 'Neurons' },
  ];
  return (
    <>
      <PanelHeader>
        <PanelTitle>Files</PanelTitle>
      </PanelHeader>
      <PanelToolbar>
        <button aria-label="Open files">{icons.filesGray}</button>
        <button aria-label="Refresh">{icons.refresh}</button>
        <button aria-label="File properties">{icons.fileProps}</button>
        <ToolDivider />
      </PanelToolbar>
      <Tree>
        {folders.map(({ open, depth = 0, name }, i) => (
          <TreeRow key={i} $depth={depth}>
            <Chevron dir={open ? 'down' : 'right'} size={20} color={open ? '#333' : '#9a9a9a'} />
            <TreeFolder><FolderStrip /></TreeFolder>
            {name}
          </TreeRow>
        ))}
      </Tree>
      <Scrollbar horizontal before={1} thumb={400} after={160} />
    </>
  );
}

function PropertiesPanel() {
  return (
    <>
      <PanelHeader>
        <PanelTitle>Properties</PanelTitle>
      </PanelHeader>
      <PanelToolbar>
        <button>Apply (F5)</button>
      </PanelToolbar>
      <PropertyBox>
        <PropertyTable>
          <thead>
            <tr>
              <td>
                <svg width="26" height="22" viewBox="0 0 26 22" aria-hidden="true">
                  <path d="M11 13H24V0Z" fill="#000" />
                </svg>
              </td>
              <th colSpan="2">Analysis Properties</th>
            </tr>
          </thead>
          <tbody>
            {properties.map(([name, value]) => (
              <tr key={name}>
                <td />
                <th scope="row">{name}</th>
                <td>{value}</td>
              </tr>
            ))}
          </tbody>
        </PropertyTable>
        <Scrollbar before={1} thumb={200} after={60} />
      </PropertyBox>
    </>
  );
}

function Documents() {
  return (
    <DocumentArea>
      <TabStrip>
        <DocumentTab>
          <TabLabel><Bars />TestDataFile5.nex [Data]</TabLabel>
          <TabClose aria-label="Close tab"><Cross size={20} width={4} /></TabClose>
        </DocumentTab>
        <DocumentTab $active>
          <TabLabel><Bars />TestDataFile5.nex [Graphs2]</TabLabel>
          <TabClose aria-label="Close tab"><Cross size={20} width={4} /></TabClose>
        </DocumentTab>
        <TabControls>
          <button aria-label="Previous tab">
            <svg width="13" height="20" viewBox="0 0 13 20" fill="none">
              <path d="M11 2L2 10L11 18Z" stroke="#000" strokeWidth="2" />
            </svg>
          </button>
          <button aria-label="Next tab">
            <svg width="13" height="20" viewBox="0 0 13 20" fill="none">
              <path d="M2 2L11 10L2 18Z" stroke="#000" strokeWidth="2" />
            </svg>
          </button>
          <button aria-label="Tab list"><Caret /></button>
          <button aria-label="Close document"><Cross size={24} width={4} /></button>
        </TabControls>
      </TabStrip>
      <DocumentFrame>
        <DocumentView>
          <DocumentBody>
            <Page>
              <PageTitle>Interspike Interval Histograms, bin = 5 ms</PageTitle>
              <Figure>
                <AxisTitle>Counts/bin</AxisTitle>
                <ChartGrid>
                  {charts.map((chart) => (
                    <Histogram key={chart.name} {...chart} />
                  ))}
                </ChartGrid>
              </Figure>
            </Page>
            <Scrollbar before={195} thumb={600} after={221} />
          </DocumentBody>
          <Scrollbar horizontal corner before={17} thumb={1230} after={41} />
        </DocumentView>
      </DocumentFrame>
    </DocumentArea>
  );
}

function AnalysesPanel() {
  return (
    <>
      <PanelHeader>
        <PanelTitle>Analyses</PanelTitle>
        <HeaderButtons />
      </PanelHeader>
      <ListBox>
        <List>
          <GroupButton><Chevron dir="right" size={18} color="#9a9a9a" />Analyses of Continuous Data</GroupButton>
          <GroupButton><Chevron dir="right" size={18} color="#9a9a9a" />Recently Used Analyses</GroupButton>
          <GroupButton><Chevron dir="down" size={18} color="#333" width={4} />All Analyses</GroupButton>
          <Items>
            {analyses.map((name, i) => (
              <li key={name}>
                <ItemButton $active={i === 1}><Bars />{name}</ItemButton>
              </li>
            ))}
          </Items>
        </List>
        <Scrollbar before={1} thumb={462} after={518} />
      </ListBox>
      <VariablesPanel>
        <PanelHeader>
          <PanelTitle>Variables</PanelTitle>
          <HeaderButtons />
        </PanelHeader>
        <VariablesText>Show in Available:</VariablesText>
      </VariablesPanel>
    </>
  );
}

const Overlay = styled.svg`
  position: absolute;
  z-index: 5;
  top: 40px;
  left: 600px;
  pointer-events: none;
  filter: drop-shadow(3px 4px 2px rgba(0, 0, 0, 0.4));
`;

function Pointer() {
  return (
    <Overlay width="260" height="330" viewBox="602 42 260 330">
      <path d="M843 48L850 55L638 292L644 299L613 312L622 279L630 285Z" fill="#de1a1a" />
      <path
        d="M651 320V354L659 347L665 359L670 357L665 345H676Z"
        fill="#fff"
        stroke="#000"
        strokeWidth="1"
      />
    </Overlay>
  );
}

function App() {
  return (
    <>
      <GlobalStyle />
      <Window>
        <TitleBar>
          <Logo />
          <Title>NeuroExplorer - [TestDataFile5.nex [Graphs2]]</Title>
          <CaptionButton aria-label="Minimize">
            <svg width="20" height="20"><path d="M0 10H20" stroke="#000" strokeWidth="2" /></svg>
          </CaptionButton>
          <CaptionButton aria-label="Maximize">
            <svg width="20" height="20"><rect x="1" y="1" width="18" height="18" fill="none" stroke="#000" strokeWidth="2" /></svg>
          </CaptionButton>
          <CaptionButton aria-label="Close">
            <Cross size={22} width={2} />
          </CaptionButton>
        </TitleBar>
        <MenuBar>
          <Grip />
          {menusBefore.map((name) => (
            <MenuSlot key={name}><MenuButton>{name}</MenuButton></MenuSlot>
          ))}
          <MenuSlot>
            <MenuButton $open>View</MenuButton>
            <ViewMenu />
          </MenuSlot>
          {menusAfter.map((name) => (
            <MenuSlot key={name}><MenuButton>{name}</MenuButton></MenuSlot>
          ))}
          <MdiControls>
            <button aria-label="Minimize document">
              <svg width="12" height="18"><path d="M0 16H12" stroke="#000" strokeWidth="3" /></svg>
            </button>
            <button aria-label="Restore document">
              <svg width="22" height="18" fill="none" stroke="#000" strokeWidth="2">
                <path d="M6 7V2H20V12H15M1 7H15V17H1ZM1 8H15M6 3H20" />
              </svg>
            </button>
            <button aria-label="Close document window"><Cross width={4} /></button>
          </MdiControls>
        </MenuBar>
        <MainToolbar />
        <Workspace>
          <Column $width={636}>
            <FilesPanel />
            <PanelGap />
            <PropertiesPanel />
          </Column>
          <Documents />
          <Column $width={584}>
            <AnalysesPanel />
          </Column>
          <SideBar>
            <SideTab><TemplateIcon bright /><SideTabText>Templates</SideTabText></SideTab>
            <SideTab><ScriptIcon /><SideTabText>Scripts</SideTabText></SideTab>
          </SideBar>
        </Workspace>
        <DockBar>
          <DockTab><ExploreIcon color="#4f6fa8" />Explore</DockTab>
        </DockBar>
        <StatusBar>
          <StatusText>Open numerical results window</StatusText>
          <StatusCell />
          <StatusCell>X:</StatusCell>
          <StatusCell>Y:</StatusCell>
          <StatusCell>Template: None</StatusCell>
          <svg width="35" height="26" viewBox="0 0 35 26" stroke="#a0a0a0" strokeWidth="2">
            <path d="M15 26L35 6M22 26L35 13M29 26L35 20" />
          </svg>
        </StatusBar>
        <Pointer />
      </Window>
    </>
  );
}

export default App;
